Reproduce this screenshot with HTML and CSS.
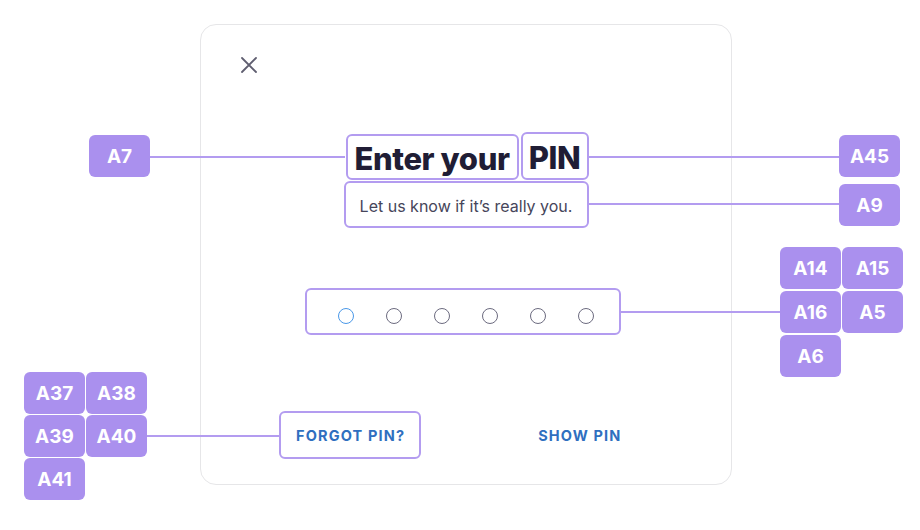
FILE: index.html
```html
<!DOCTYPE html>
<html lang="en">
<head>
    <meta charset="UTF-8">
    <meta name="viewport" content="width=device-width, initial-scale=1.0">
    <title>Enter your PIN</title>
    <link rel="stylesheet" href="styles.css">
</head>
<body>
    <div class="stage">
        <div class="card">
            <button class="close" aria-label="Close">
                <svg width="16" height="16" viewBox="0 0 16 16">
                    <path d="M1 1 L15 15 M15 1 L1 15" stroke="#5f5e70" stroke-width="1.8" stroke-linecap="round" fill="none"/>
                </svg>
            </button>

            <div class="heading">
                <h1 class="title"><span class="mark first">Enter your</span><span class="mark last">PIN</span></h1>
                <p class="subtitle mark">Let us know if it’s really you.</p>
            </div>

            <div class="pin mark">
                <span class="dot active"></span>
                <span class="dot"></span>
                <span class="dot"></span>
                <span class="dot"></span>
                <span class="dot"></span>
                <span class="dot"></span>
            </div>

            <div class="actions">
                <button class="link mark">FORGOT PIN?</button>
                <button class="link">SHOW PIN</button>
            </div>
        </div>

        <!-- annotation overlay -->
        <div class="line" style="left:150px; top:156px; width:195px;"></div>
        <div class="line" style="left:588px; top:156px; width:251px;"></div>
        <div class="line" style="left:588px; top:203px; width:251px;"></div>
        <div class="line" style="left:621px; top:311px; width:159px;"></div>
        <div class="line" style="left:147px; top:435px; width:132px;"></div>

        <div class="badges" style="left:89px; top:135px;">
            <span class="badge">A7</span>
        </div>
        <div class="badges" style="left:839px; top:135px;">
            <span class="badge">A45</span>
        </div>
        <div class="badges" style="left:839px; top:184px;">
            <span class="badge">A9</span>
        </div>
        <div class="badges two right" style="left:780px; top:247px;">
            <span class="badge">A14</span>
            <span class="badge">A15</span>
            <span class="badge">A16</span>
            <span class="badge">A5</span>
            <span class="badge">A6</span>
        </div>
        <div class="badges two" style="left:24px; top:372px;">
            <span class="badge">A37</span>
            <span class="badge">A38</span>
            <span class="badge">A39</span>
            <span class="badge">A40</span>
            <span class="badge">A41</span>
        </div>
    </div>
</body>
</html>
```

FILE: styles.css
```css
* {
    box-sizing: border-box;
}
body {
    margin: 0;
    background: #ffffff;
    font-family: Inter, "Noto Sans", sans-serif;
}
.stage {
    position: relative;
    width: 920px;
    height: 530px;
    overflow: hidden;
}
.card {
    margin: 24px 0 0 200px;
    width: 532px;
    height: 461px;
    border: 1px solid #e6e6e8;
    border-radius: 16px;
    padding-top: 32px;
    display: flex;
    flex-direction: column;
    align-items: center;
}
.close {
    align-self: flex-start;
    margin-left: 40px;
    width: 16px;
    height: 16px;
    padding: 0;
    border: none;
    background: none;
    display: flex;
    cursor: pointer;
}
.mark {
    border: 2px solid #b39cf0;
    border-radius: 6px;
}
.heading {
    margin-top: 59px;
    display: flex;
    flex-direction: column;
    align-items: center;
    gap: 1px;
}
.title {
    margin: 0 0 0 2px;
    display: flex;
    align-items: flex-end;
    gap: 2px;
    font-size: 31px;
    font-weight: 800;
    color: #201d35;
    letter-spacing: -0.4px;
}
.title span {
    padding-top: 3px;
    display: flex;
    align-items: center;
    justify-content: center;
}
.title .first {
    width: 173px;
    height: 46px;
}
.title .last {
    width: 68px;
    height: 48px;
}
.subtitle {
    margin: 0;
    width: 245px;
    height: 47px;
    padding-top: 3px;
    display: flex;
    align-items: center;
    justify-content: center;
    font-size: 16px;
    color: #46455a;
}
.pin {
    margin-top: 60px;
    margin-right: 6px;
    width: 316px;
    height: 47px;
    padding: 9px 25px 0 31px;
    display: flex;
    align-items: center;
    justify-content: space-between;
}
.dot {
    width: 16px;
    height: 16px;
    border: 1.5px solid #6c6b7f;
    border-radius: 50%;
}
.dot.active {
    border-color: #4a98e8;
}
.actions {
    margin-top: 76px;
    align-self: stretch;
    padding-left: 78px;
    display: flex;
    gap: 100px;
}
.link {
    height: 48px;
    padding: 0 14px 0 15px;
    border: 2px solid transparent;
    background: none;
    font-family: Inter, "Noto Sans", sans-serif;
    font-size: 14.5px;
    font-weight: 700;
    letter-spacing: 1.15px;
    color: #2f6fbf;
    cursor: pointer;
}
.link.mark {
    border-color: #b39cf0;
}
.line {
    position: absolute;
    height: 2px;
    background: #b39cf0;
}
.badges {
    position: absolute;
    display: grid;
    grid-template-columns: 61px;
    gap: 1px;
}
.badges.two {
    grid-template-columns: 61px 61px;
}
.badges.right {
    row-gap: 2px;
}
.badge {
    height: 42px;
    border-radius: 6px;
    background: #aa90ee;
    color: #ffffff;
    font-size: 19px;
    font-weight: 700;
    display: flex;
    align-items: center;
    justify-content: center;
}
```
